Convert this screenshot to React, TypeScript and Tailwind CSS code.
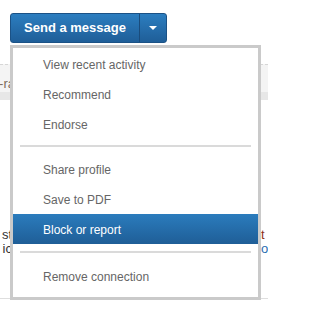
const menuTop = ['View recent activity', 'Recommend', 'Endorse'];
const menuMid = ['Share profile', 'Save to PDF', 'Block or report'];

const MenuItem = ({ label, active }: { label: string; active?: boolean }) => (
  <div
    className={
      active
        ? 'flex h-[30px] items-center bg-linear-to-b from-[#2b7cbd] to-[#1f5e97] pl-[30px] pt-[2px] text-white'
        : 'flex h-[30px] items-center pl-[30px] pt-[2px] text-[#666666]'
    }
  >
    {label}
  </div>
);

export default function App() {
  return (
    <div className="relative h-[312px] w-[268px] overflow-hidden bg-white font-['Liberation_Sans',Arial,sans-serif]">
      {/* split button */}
      <div className="pl-[10px] pt-[13px]">
        <div className="inline-flex h-[30px] rounded-[3px] border border-[#1b5286] bg-linear-to-b from-[#2c7ec0] to-[#1f5e98]">
          <span className="flex w-[128px] items-center justify-center text-[13px] font-bold text-white">
            Send a message
          </span>
          <span className="flex w-[27px] items-center justify-center border-l border-[#1a4c7c]">
            <span className="h-0 w-0 border-x-[4px] border-t-[4px] border-x-transparent border-t-white" />
          </span>
        </div>
      </div>

      {/* page behind the menu */}
      <div className="mt-[21px] h-[28px] border-t border-dashed border-[#d6d6d6] bg-[#f4f4f4]">
        <div className="flex w-[15px] justify-end whitespace-nowrap pt-[12px] text-[13px] leading-[14px] text-[#7d6d5e]">
          -ra
        </div>
      </div>
      <div className="h-[8px] bg-[#e7e7e7]" />
      <div className="mt-[128px] flex justify-between text-[13px] leading-[14px]">
        <div className="flex w-[12px] flex-col items-end whitespace-nowrap text-[#333333]">
          <span>st</span>
          <span>ic</span>
        </div>
        <div className="flex w-[7px] flex-col whitespace-nowrap">
          <span className="text-[#8e2f17]">t</span>
          <span className="text-[#2a6db0]">o</span>
        </div>
      </div>
      <div className="mt-[42px] border-t border-[#dedede]" />

      {/* dropdown */}
      <div className="absolute left-[10px] top-[45px] h-[255px] w-[251px] border-[3px] border-[#cacaca] bg-white pt-[1px] text-[12px]">
        {menuTop.map((l) => (
          <MenuItem key={l} label={l} />
        ))}
        <div className="mx-[7px] mb-[7px] mt-[6px] h-[2px] bg-[#dadada]" />
        {menuMid.map((l) => (
          <MenuItem key={l} label={l} active={l === 'Block or report'} />
        ))}
        <div className="mx-[7px] mb-[8px] mt-[7px] h-[2px] bg-[#dadada]" />
        <MenuItem label="Remove connection" />
      </div>
    </div>
  );
}
